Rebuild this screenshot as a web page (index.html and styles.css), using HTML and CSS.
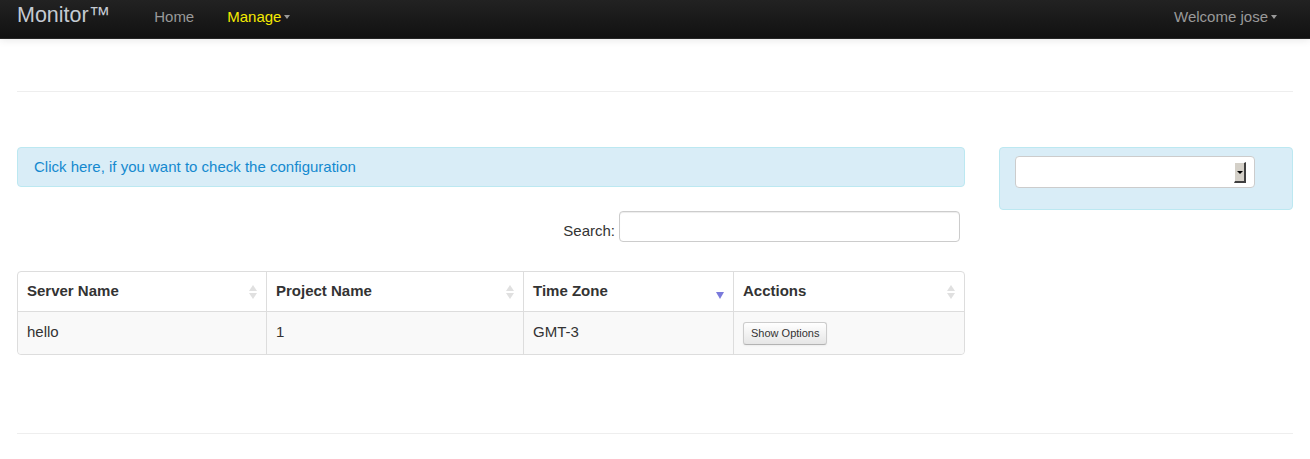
FILE: index.html
```html
<!DOCTYPE html>
<html>
<head>
<meta charset="utf-8">
<link rel="stylesheet" href="styles.css">
</head>
<body>
<nav class="navbar">
  <a class="brand">Monitor™</a>
  <ul class="nav">
    <li><a class="nav-link">Home</a></li>
    <li><a class="nav-link active">Manage<span class="caret"></span></a></li>
  </ul>
  <div class="nav-right"><a class="nav-link">Welcome jose<span class="caret"></span></a></div>
</nav>
<div class="container">
  <hr class="rule top-rule">
  <div class="row">
    <div class="main">
      <div class="alert"><a class="alert-link">Click here, if you want to check the configuration</a></div>
      <div class="filter"><label>Search:</label><input class="search" type="text"></div>
      <table class="grid">
        <thead>
          <tr>
            <th class="c1"><span>Server Name</span><span class="sort both"></span></th>
            <th class="c2"><span>Project Name</span><span class="sort both"></span></th>
            <th class="c3"><span>Time Zone</span><span class="sort desc"></span></th>
            <th class="c4"><span>Acctions</span><span class="sort both"></span></th>
          </tr>
        </thead>
        <tbody>
          <tr>
            <td>hello</td>
            <td>1</td>
            <td>GMT-3</td>
            <td><button class="btn">Show Options</button></td>
          </tr>
        </tbody>
      </table>
    </div>
    <div class="side">
      <div class="well">
        <div class="select"><span class="select-btn"><span class="select-arrow"></span></span></div>
      </div>
    </div>
  </div>
  <hr class="rule bottom-rule">
</div>
</body>
</html>
```
FILE: styles.css
```css
* { box-sizing: border-box; }
html, body { margin: 0; padding: 0; background: #fff; }
body { font-family: "Liberation Sans", Arial, sans-serif; font-size: 15px; color: #333; }

.navbar {
  height: 39px;
  background: linear-gradient(to bottom, #222 0%, #111 100%);
  border-bottom: 1px solid #252525;
  box-shadow: 0 1px 8px rgba(0,0,0,0.1);
  display: flex;
  align-items: center;
  padding: 0 17px;
}
.brand { font-size: 21.5px; color: #c4cad2; padding-bottom: 7px; }
.nav { list-style: none; margin: 0 0 0 44px; padding: 0; display: flex; gap: 33px; }
.nav-link { color: #999; font-size: 15px; display: inline-flex; align-items: center; padding-bottom: 6px; }
.nav-link.active { color: #f4ea00; }
.caret {
  display: inline-block; width: 0; height: 0; margin-left: 3px; margin-top: 1px;
  border-left: 3.5px solid transparent; border-right: 3.5px solid transparent;
  border-top: 4px solid #999;
}
.nav-right { margin-left: auto; padding-right: 16px; }

.container { padding: 0 17px; }
.rule { margin: 0; border: 0; border-top: 1px solid #eee; border-bottom: 1px solid #fff; }
.top-rule { margin-top: 52px; }
.bottom-rule { margin-top: 78px; }

.row { display: flex; gap: 34px; margin-top: 54px; }
.main { width: 948px; }
.side { flex: 1; }

.alert {
  height: 40px; background: #d9edf7; border: 1px solid #bce8f1; border-radius: 4px;
  padding: 0 16px 2px; display: flex; align-items: center;
}
.alert-link { color: #1489cf; }

.filter { display: flex; justify-content: flex-end; align-items: center; margin-top: 24px; padding-right: 5px; }
.filter label { margin-right: 4px; margin-top: 8px; }
.search {
  width: 341px; height: 31px; border: 1px solid #ccc; border-radius: 4px;
  box-shadow: inset 0 1px 1px rgba(0,0,0,0.075); font: inherit;
}

.grid {
  width: 100%; margin-top: 29px; border: 1px solid #ddd; border-collapse: separate;
  border-spacing: 0; border-radius: 4px;
}
.grid th, .grid td { text-align: left; padding: 0 9px; border-left: 1px solid #ddd; vertical-align: middle; }
.grid th:first-child, .grid td:first-child { border-left: 0; }
.grid th { height: 39px; font-weight: bold; position: relative; padding-bottom: 2px; }
.grid td { height: 43px; border-top: 1px solid #ddd; background: #f9f9f9; padding-bottom: 3px; }
.grid tbody tr td:first-child { border-bottom-left-radius: 4px; }
.grid tbody tr td:last-child { border-bottom-right-radius: 4px; }
.c1 { width: 248px; }
.c2 { width: 257px; }
.c3 { width: 210px; }

.sort { position: absolute; right: 8px; top: 13px; width: 9px; height: 14px; }
.sort.both::before, .sort.both::after {
  content: ""; position: absolute; left: 0; width: 0; height: 0;
  border-left: 4.5px solid transparent; border-right: 4.5px solid transparent;
}
.sort.both::before { top: 0; border-bottom: 6px solid #e0e0e0; }
.sort.both::after { top: 8px; border-top: 6px solid #e0e0e0; }
.sort.desc { right: 8px; top: 20px; }
.sort.desc::after {
  content: ""; position: absolute; left: 0; top: 0; width: 0; height: 0;
  border-left: 4.5px solid transparent; border-right: 4.5px solid transparent;
  border-top: 7px solid #7a7adb;
}

.btn {
  font-family: "Liberation Sans", Arial, sans-serif; font-size: 11px; color: #333;
  height: 23px; padding: 0 7px; border: 1px solid #ccc; border-bottom-color: #b3b3b3;
  border-radius: 3px; background: linear-gradient(to bottom, #fff, #e6e6e6);
  box-shadow: inset 0 1px 0 rgba(255,255,255,0.2), 0 1px 2px rgba(0,0,0,0.05);
  margin-top: 3px;
}

.well {
  height: 63px; background: #d9edf7; border: 1px solid #bce8f1; border-radius: 4px;
  padding: 8px 15px;
}
.select {
  width: 240px; height: 32px; background: #fff; border: 1px solid #ccc; border-radius: 4px;
  position: relative;
}
.select-btn {
  position: absolute; right: 8px; top: 5px; width: 12px; height: 21px;
  background: #d4d0c8; border-right: 2px solid #404040; border-bottom: 2px solid #404040;
  border-top: 1px solid #fff; border-left: 1px solid #fff;
  display: flex; align-items: center; justify-content: center;
}
.select-arrow {
  width: 0; height: 0; border-left: 3px solid transparent; border-right: 3px solid transparent;
  border-top: 3px solid #000;
}
```
